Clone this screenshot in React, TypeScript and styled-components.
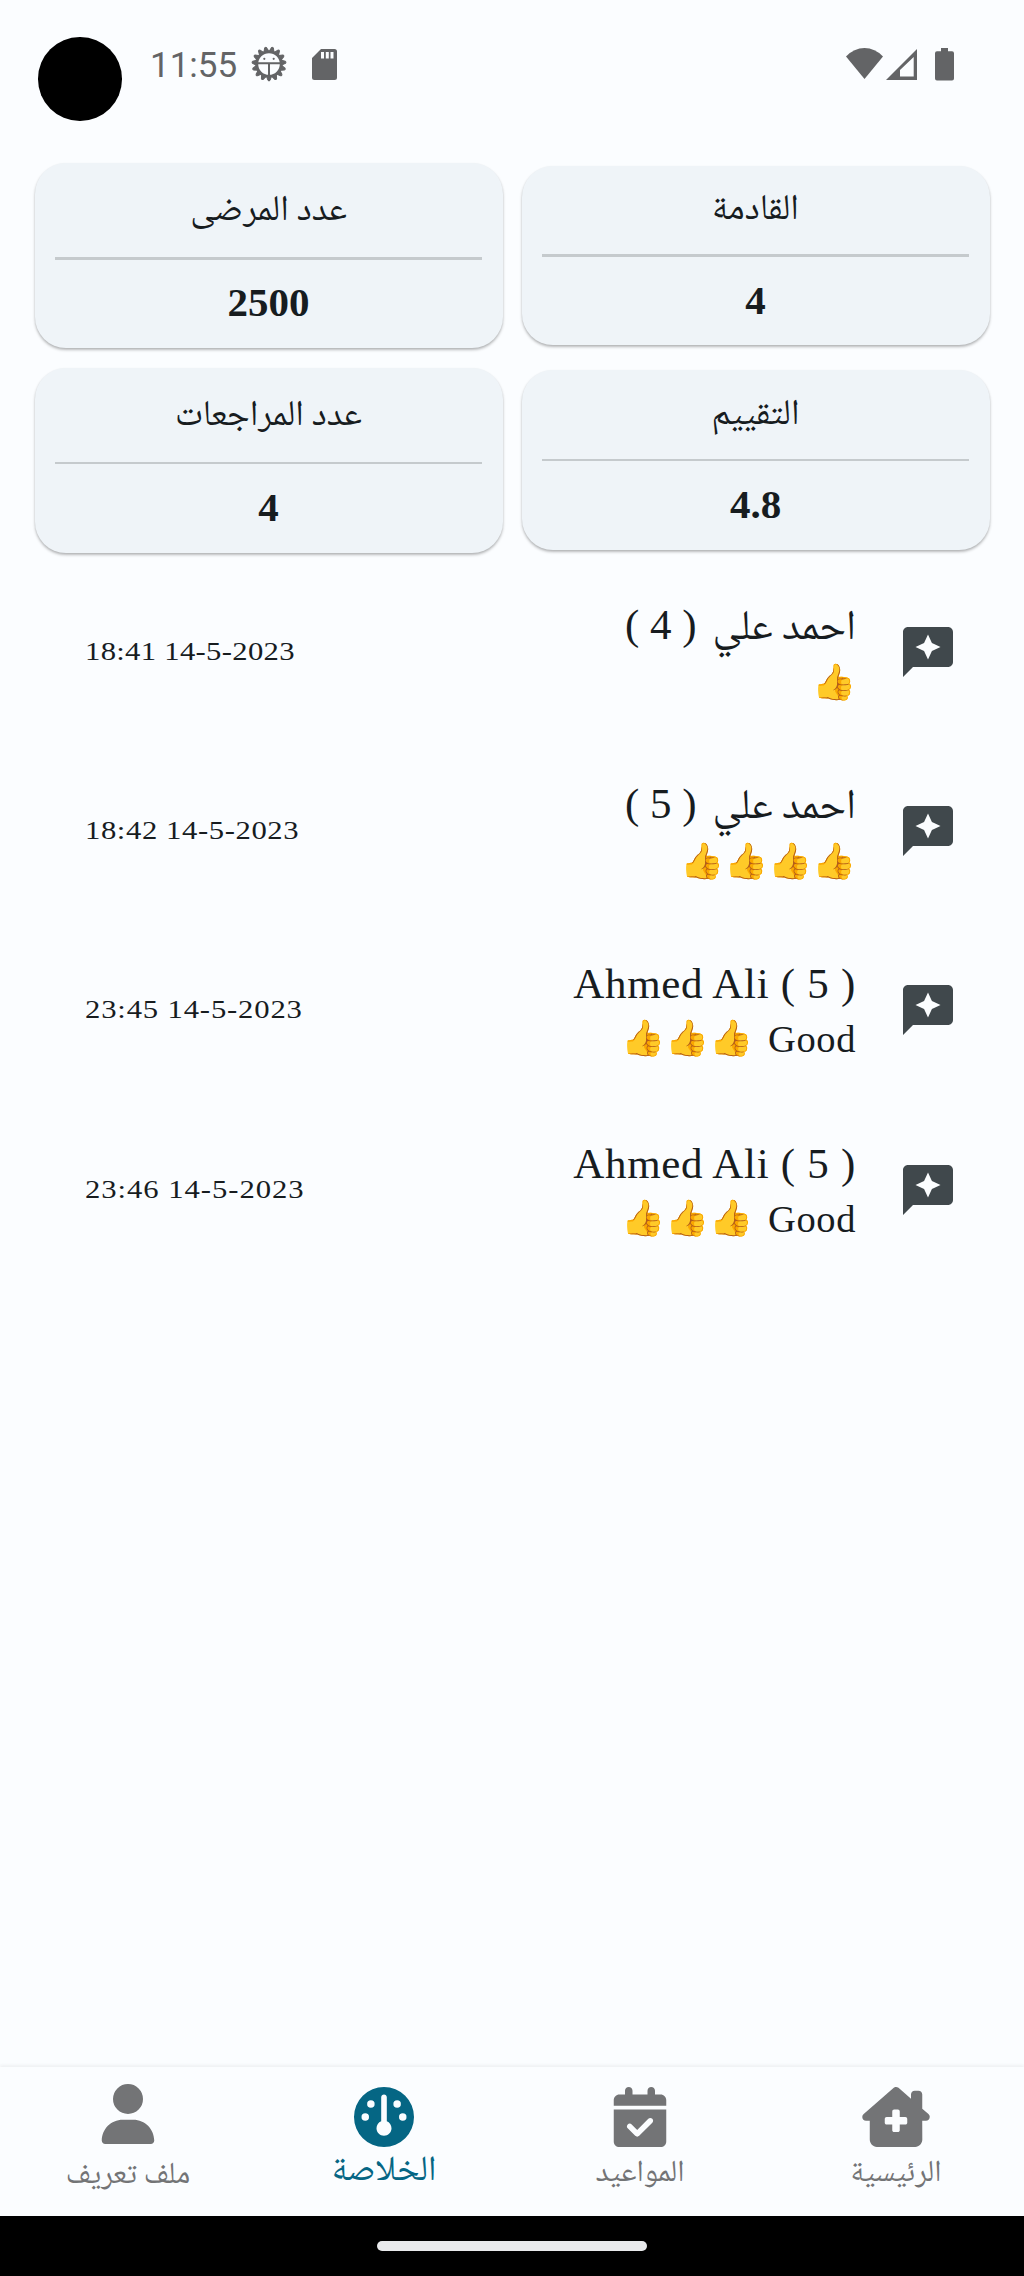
import React from "react";
import styled, { createGlobalStyle } from "styled-components";
import { FaUser, FaGauge, FaCalendarCheck, FaHouseChimneyMedical } from "react-icons/fa6";
import { MdReviews } from "react-icons/md";

const GlobalStyle = createGlobalStyle`
  body { margin: 0; background: #fbfdff; }
  * { box-sizing: border-box; }
`;

const SERIF = `"Liberation Serif", "Noto Sans", "DejaVu Sans", serif`;
const ARABIC = `"Noto Naskh Arabic", "Noto Sans Arabic", "Noto Sans", "DejaVu Sans", sans-serif`;

const Screen = styled.div`
  width: 1024px;
  height: 2276px;
  display: flex;
  flex-direction: column;
  background: #fbfdff;
  color: #171c1f;
  font-family: ${SERIF};
  overflow: hidden;
`;

const StatusBar = styled.header`
  height: 163px;
  display: flex;
  align-items: flex-start;
  padding: 37px 70px 0 38px;
  color: #636466;
`;
const Camera = styled.div`
  width: 83.5px;
  height: 83.5px;
  border-radius: 50%;
  background: #000;
`;
const Clock = styled.div`
  margin: 9px 0 0 28.5px;
  width: 93px;
  font: 400 35px/40px Roboto, sans-serif;
`;
const StatusIcon = styled.svg<{ $w: number; $h: number; $top: number; $left: number }>`
  display: block;
  width: ${(p) => p.$w}px;
  height: ${(p) => p.$h}px;
  margin: ${(p) => p.$top}px 0 0 ${(p) => p.$left}px;
`;
const Spacer = styled.div`
  flex: 1;
`;

const Stats = styled.section`
  display: grid;
  grid-template-columns: 468px 468px;
  grid-template-rows: 185px 185px;
  gap: 19.5px 19px;
  padding: 0 34.5px;
  align-items: center;
`;
const Card = styled.article<{ $h: number }>`
  height: ${(p) => p.$h}px;
  padding: 0 20.5px;
  border-radius: 31px;
  background: #eff4f8;
  box-shadow: 0 2px 3px rgba(0, 0, 0, 0.26), 0 1px 2px rgba(0, 0, 0, 0.06);
  display: flex;
  flex-direction: column;
  align-items: center;
`;
const CardTitle = styled.h2<{ $h: number; $drop: number }>`
  margin: 0;
  height: ${(p) => p.$h}px;
  padding-top: ${(p) => p.$drop}px;
  display: flex;
  align-items: center;
  font: 400 36px/40px ${ARABIC};
`;
const Divider = styled.div`
  width: 427px;
  height: 2.6px;
  background: #c5cacd;
`;
const CardValue = styled.div`
  flex: 1;
  display: flex;
  align-items: center;
  padding-bottom: 3px;
  font: 700 41px/50px ${SERIF};
`;

const Reviews = styled.ul`
  list-style: none;
  margin: 10px 0 0;
  padding: 0 66px 0 85px;
  flex: 1;
`;
const Review = styled.li`
  height: 179.2px;
  display: flex;
  align-items: center;
`;
const ReviewIcon = styled(MdReviews)`
  width: 60px;
  height: 60px;
  margin: 0 0 0 42px;
  color: #40484c;
`;
const ReviewBody = styled.div<{ $gap: number }>`
  flex: 1;
  display: flex;
  flex-direction: column;
  align-items: flex-end;
  gap: ${(p) => p.$gap}px;
`;
const Name = styled.div<{ $latin: boolean }>`
  font: 400 43px/58px ${SERIF};
  height: 58px;
  letter-spacing: ${(p) => (p.$latin ? 0.7 : -0.4)}px;
  white-space: nowrap;
`;
const NameScript = styled.span`
  margin-left: 5px;
  letter-spacing: 0;
  font: 400 42px/50px ${ARABIC};
`;
const Comment = styled.div`
  display: flex;
  align-items: center;
  gap: 15px;
  height: 52px;
  font: 400 38.5px/52px ${SERIF};
  letter-spacing: 0.6px;
`;
const Thumbs = styled.span`
  font-size: 35.3px;
  letter-spacing: 0;
`;
const Time = styled.time<{ $track: number }>`
  font: 400 26px/40px ${SERIF};
  letter-spacing: ${(p) => p.$track}px;
  white-space: nowrap;
  transform: scaleX(1.18);
  transform-origin: left center;
`;

const Nav = styled.nav`
  height: 149px;
  display: grid;
  grid-template-columns: repeat(4, 256px);
  box-shadow: 0 -2px 3px rgba(0, 0, 0, 0.05);
  background: #fbfdff;
`;
const NavItem = styled.a<{ $active?: boolean; $top: number; $gap: number }>`
  display: flex;
  flex-direction: column;
  align-items: center;
  padding-top: ${(p) => p.$top}px;
  gap: ${(p) => p.$gap}px;
  color: ${(p) => (p.$active ? "#056684" : "#737476")};
  font: 400 ${(p) => (p.$active ? 35.3 : 30.7)}px/40px ${ARABIC};
  white-space: nowrap;
  & > svg { height: 60px; width: 68px; }
`;
const SystemBar = styled.footer`
  height: 60px;
  background: #000;
  display: flex;
  justify-content: center;
  padding-top: 25px;
`;
const Pill = styled.div`
  width: 270px;
  height: 10px;
  border-radius: 5px;
  background: #e9eaec;
`;

const teeth = Array.from({ length: 15 }, (_, i) => i * 24);

function StatCard({ title, value, tall }: { title: string; value: string; tall?: boolean }) {
  return (
    <Card $h={tall ? 185 : 179.5}>
      <CardTitle $h={tall ? 94 : 88.5} $drop={tall ? 6 : 4} dir="rtl">{title}</CardTitle>
      <Divider />
      <CardValue>{value}</CardValue>
    </Card>
  );
}

const reviews = [
  { name: "احمد علي", rate: 4, text: "", thumbs: 1, time: "18:41 14-5-2023", track: 0.25, latin: false },
  { name: "احمد علي", rate: 5, text: "", thumbs: 4, time: "18:42 14-5-2023", track: 0.5, latin: false },
  { name: "Ahmed Ali", rate: 5, text: "Good", thumbs: 3, time: "23:45 14-5-2023", track: 0.7, latin: true },
  { name: "Ahmed Ali", rate: 5, text: "Good", thumbs: 3, time: "23:46 14-5-2023", track: 0.8, latin: true },
];

export default function App() {
  return (
    <Screen>
      <GlobalStyle />
      <StatusBar>
        <Camera />
        <Clock>11:55</Clock>
        <StatusIcon $w={36} $h={36} $top={9} $left={8} viewBox="0 0 36 36">
          <circle cx="18" cy="18" r="12.3" fill="none" stroke="currentColor" strokeWidth="3" />
          {teeth.map((a) => (
            <path key={a} d="M15.9 31.5L17 34.4Q18 35.6 19 34.4L20.1 31.5Z" fill="currentColor" stroke="currentColor" strokeWidth="1" transform={`rotate(${a} 18 18)`} />
          ))}
          <path d="M7 17.2H29M18 17V30" stroke="currentColor" strokeWidth="2" />
          <circle cx="13.3" cy="12.8" r="1.1" fill="currentColor" />
          <circle cx="22.7" cy="12.8" r="1.1" fill="currentColor" />
        </StatusIcon>
        <StatusIcon $w={25} $h={31} $top={12} $left={25} viewBox="0 0 25 31">
          <path fillRule="evenodd" fill="currentColor" d="M9 0H22.5Q25 0 25 2.5V28.5Q25 31 22.5 31H2.5Q0 31 0 28.5V9ZM9 3V9.5H12V3ZM13.8 3V9.5H16.8V3ZM18.5 3V9.5H21.5V3Z" />
        </StatusIcon>
        <Spacer />
        <StatusIcon $w={37} $h={31} $top={11} $left={0} viewBox="0 0 37 31">
          <path fill="currentColor" d="M0 8.5Q8 0 18.5 0T37 8.5L18.5 31Z" />
        </StatusIcon>
        <StatusIcon $w={31} $h={31} $top={12} $left={3} viewBox="0 0 31 31">
          <path fillRule="evenodd" fill="currentColor" d="M0 31L31 0V31ZM14 27.5H27.7V8L14 21Z" />
        </StatusIcon>
        <StatusIcon $w={19} $h={33} $top={11} $left={18} viewBox="0 0 19 33">
          <path fill="currentColor" d="M6 0H13V3.3H17Q19 3.3 19 5.3V30.5Q19 32.5 17 32.5H2Q0 32.5 0 30.5V5.3Q0 3.3 2 3.3H6Z" />
        </StatusIcon>
      </StatusBar>
      <Stats>
        <StatCard title="عدد المرضى" value="2500" tall />
        <StatCard title="القادمة" value="4" />
        <StatCard title="عدد المراجعات" value="4" tall />
        <StatCard title="التقييم" value="4.8" />
      </Stats>
      <Reviews>
        {reviews.map((r) => (
          <Review key={r.time}>
            <Time $track={r.track}>{r.time}</Time>
            <ReviewBody $gap={r.latin ? 0 : 3}>
              <Name $latin={r.latin} dir={r.latin ? "ltr" : "rtl"}>
                {r.latin ? r.name : <NameScript>{r.name}</NameScript>} ( {r.rate} )
              </Name>
              <Comment dir="rtl">
                {r.text && <span>{r.text}</span>}
                <Thumbs>{"👍".repeat(r.thumbs)}</Thumbs>
              </Comment>
            </ReviewBody>
            <ReviewIcon />
          </Review>
        ))}
      </Reviews>
      <Nav>
        <NavItem $top={17} $gap={12}><FaUser />ملف تعريف</NavItem>
        <NavItem $active $top={20} $gap={5}><FaGauge />الخلاصة</NavItem>
        <NavItem $top={20} $gap={7}><FaCalendarCheck />المواعيد</NavItem>
        <NavItem $top={20} $gap={7}><FaHouseChimneyMedical />الرئيسية</NavItem>
      </Nav>
      <SystemBar><Pill /></SystemBar>
    </Screen>
  );
}
